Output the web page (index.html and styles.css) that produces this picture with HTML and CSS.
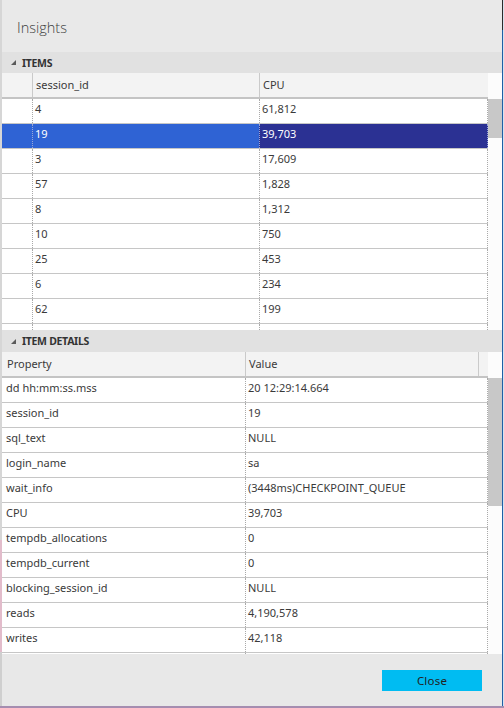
FILE: index.html
```
<!DOCTYPE html>
<html>
<head>
<meta charset="utf-8">
<link rel="stylesheet" href="styles.css">
</head>
<body>
<div class="screen">
  <div class="edge-left"></div>
  <div class="dialog">
    <div class="title">Insights</div>

    <div class="section-head">
      <svg class="tri" width="5" height="5" viewBox="0 0 5 5"><polygon points="5,0 5,5 0,5"/></svg>
      <span>ITEMS</span>
    </div>
    <div class="grid-wrap items-wrap">
      <div class="table">
        <div class="row items-row head">
          <div class="cell"></div>
          <div class="cell sep">session_id</div>
          <div class="cell sep">CPU</div>
        </div>
        <div class="row items-row"><div class="cell"></div><div class="cell dot">4</div><div class="cell dot dot-r">61,812</div></div>
        <div class="row items-row selected"><div class="cell"></div><div class="cell dot">19</div><div class="cell dot dot-r sel-dark">39,703</div></div>
        <div class="row items-row"><div class="cell"></div><div class="cell dot">3</div><div class="cell dot dot-r">17,609</div></div>
        <div class="row items-row"><div class="cell"></div><div class="cell dot">57</div><div class="cell dot dot-r">1,828</div></div>
        <div class="row items-row"><div class="cell"></div><div class="cell dot">8</div><div class="cell dot dot-r">1,312</div></div>
        <div class="row items-row"><div class="cell"></div><div class="cell dot">10</div><div class="cell dot dot-r">750</div></div>
        <div class="row items-row"><div class="cell"></div><div class="cell dot">25</div><div class="cell dot dot-r">453</div></div>
        <div class="row items-row"><div class="cell"></div><div class="cell dot">6</div><div class="cell dot dot-r">234</div></div>
        <div class="row items-row"><div class="cell"></div><div class="cell dot">62</div><div class="cell dot dot-r">199</div></div>
        <div class="row items-row"><div class="cell"></div><div class="cell dot">63</div><div class="cell dot dot-r">195</div></div>
      </div>
      <div class="vscroll items-scroll"><div class="thumb"></div></div>
    </div>

    <div class="section-head details-head">
      <svg class="tri" width="5" height="5" viewBox="0 0 5 5"><polygon points="5,0 5,5 0,5"/></svg>
      <span>ITEM DETAILS</span>
    </div>
    <div class="grid-wrap details-wrap">
      <div class="table">
        <div class="row details-head-row head">
          <div class="cell pad-l">Property</div>
          <div class="cell sep">Value</div>
          <div class="cell sep"></div>
        </div>
        <div class="row details-row"><div class="cell pad-l">dd hh:mm:ss.mss</div><div class="cell dot dot-r">20 12:29:14.664</div></div>
        <div class="row details-row"><div class="cell pad-l">session_id</div><div class="cell dot dot-r">19</div></div>
        <div class="row details-row"><div class="cell pad-l">sql_text</div><div class="cell dot dot-r">NULL</div></div>
        <div class="row details-row"><div class="cell pad-l">login_name</div><div class="cell dot dot-r">sa</div></div>
        <div class="row details-row"><div class="cell pad-l">wait_info</div><div class="cell dot dot-r">(3448ms)CHECKPOINT_QUEUE</div></div>
        <div class="row details-row"><div class="cell pad-l">CPU</div><div class="cell dot dot-r">39,703</div></div>
        <div class="row details-row"><div class="cell pad-l">tempdb_allocations</div><div class="cell dot dot-r">0</div></div>
        <div class="row details-row"><div class="cell pad-l">tempdb_current</div><div class="cell dot dot-r">0</div></div>
        <div class="row details-row"><div class="cell pad-l">blocking_session_id</div><div class="cell dot dot-r">NULL</div></div>
        <div class="row details-row"><div class="cell pad-l">reads</div><div class="cell dot dot-r">4,190,578</div></div>
        <div class="row details-row"><div class="cell pad-l">writes</div><div class="cell dot dot-r">42,118</div></div>
        <div class="row details-row"><div class="cell pad-l"></div><div class="cell dot dot-r"></div></div>
      </div>
      <div class="vscroll details-scroll"><div class="thumb"></div></div>
    </div>

    <div class="footer">
      <button class="close-btn">Close</button>
    </div>
  </div>
  <div class="edge-right"></div>
  <div class="edge-far"></div>
  <div class="edge-bottom"></div>
</div>
</body>
</html>
```

FILE: styles.css
```
* { box-sizing: border-box; }

html, body {
  margin: 0;
  padding: 0;
  width: 504px;
  height: 708px;
  overflow: hidden;
  background: #e8e8e8;
}

body {
  font-family: "Noto Sans", "Open Sans", sans-serif;
  font-size: 11px;
  color: #3a3a3a;
}

.screen {
  display: grid;
  grid-template-columns: 2px 500px 1px 1px;
  grid-template-rows: 706px 2px;
  width: 504px;
  height: 708px;
}

.edge-left {
  background: linear-gradient(to bottom, #d6d6d6 0, #d6d6d6 540px, #e2bccb 540px, #e2bccb 652px, #cfcfcf 652px);
}

.edge-right {
  background: linear-gradient(to bottom, #2b2b2b 0, #2b2b2b 30px, #1f5fa6 30px);
}

.edge-far {
  background: #d8e2ee;
}

.edge-bottom {
  grid-column: 1 / 5;
  background: #a58db0;
}

.dialog {
  display: flex;
  flex-direction: column;
  background: #e8e8e8;
  overflow: hidden;
}

.title {
  height: 52px;
  flex: none;
  padding-left: 15px;
  padding-top: 3px;
  line-height: 49px;
  font-family: "Open Sans", "Noto Sans", sans-serif;
  font-weight: 300;
  font-size: 14.5px;
  color: #404040;
  background: #e9e9e9;
}

.section-head {
  height: 21px;
  flex: none;
  display: flex;
  align-items: center;
  background: #e1e1e1;
  font-weight: 700;
  font-size: 10.5px;
  letter-spacing: -0.3px;
  color: #333;
}

.details-head {
  height: 22px;
}

.tri {
  margin-left: 9px;
  margin-right: 6px;
  fill: #5a5a5a;
  flex: none;
}

.grid-wrap {
  display: flex;
  flex: none;
  overflow: hidden;
  background: #fff;
}

.items-wrap { height: 257px; }
.details-wrap { height: 302px; }

.table {
  width: 486px;
  flex: none;
  overflow: hidden;
}

.row {
  display: grid;
  height: 25px;
  border-bottom: 1px solid #c6c6c6;
  background: #fff;
}

.row.head {
  height: 26px;
  border-bottom: 2px solid #c4c4c4;
  background: #f3f3f3;
}

.items-row { grid-template-columns: 30px 227px 229px; }
.details-row { grid-template-columns: 243px 243px; }
.details-head-row { grid-template-columns: 243px 233px 10px; }

.cell {
  line-height: 20px;
  padding-left: 2px;
  white-space: nowrap;
  overflow: hidden;
}

.pad-l { padding-left: 4px; }

.head .cell { line-height: 23px; padding-left: 3px; }
.head .cell.pad-l { padding-left: 5px; }

.sep { border-left: 1px solid #cacaca; }
.dot { border-left: 1px dotted #a9a9a9; }
.dot-r { border-right: 1px dotted #a9a9a9; }

.selected {
  background: #2f63d4;
  color: #fff;
}
.selected .sel-dark { background: #2b3193; }
.selected .dot { border-color: #9aa8d8; }

.vscroll {
  width: 14px;
  flex: none;
  background: #fcfcfc;
}

.thumb {
  width: 14px;
  background: #c8c8c8;
}

.items-scroll .thumb { margin-top: 26px; height: 39px; }
.details-scroll .thumb { margin-top: 26px; height: 128px; }

.footer {
  flex: 1;
  display: flex;
  justify-content: flex-end;
  align-items: flex-start;
  padding: 16px 20px 0 0;
  background: #e8e8e8;
}

.close-btn {
  width: 100px;
  height: 21px;
  border: none;
  padding: 0;
  background: #00bcf2;
  color: #222;
  font-family: "Noto Sans", "Open Sans", sans-serif;
  font-size: 11.5px;
  letter-spacing: 0.2px;
}
```
